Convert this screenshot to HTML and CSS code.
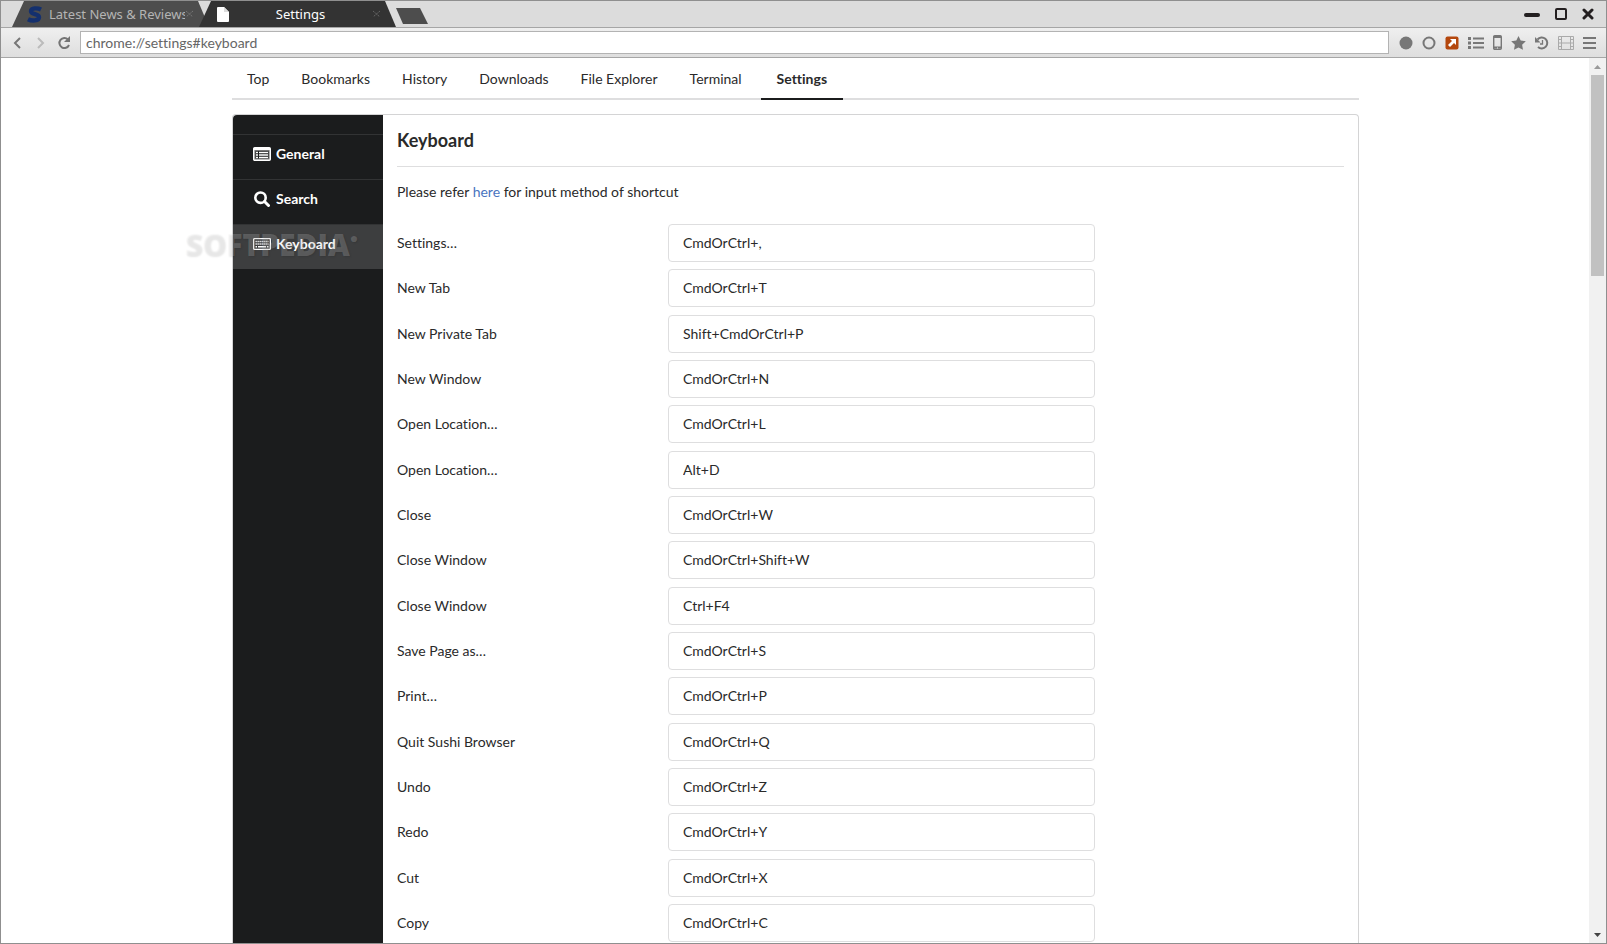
FILE: index.html
```html
<!DOCTYPE html>
<html lang="en">
<head>
  <meta charset="UTF-8">
  <meta name="viewport" content="width=device-width, initial-scale=1.0">
  <title>Settings</title>
  <link rel="stylesheet" href="styles.css">
</head>
<body>
  <!-- Tab bar -->
  <header class="tab-bar">
    <div class="tab tab-first">
      <svg class="tab-logo" width="16" height="17" viewBox="0 0 16 17"><path d="M14 3.500C11 2 4 1.500 4 5.200c0 3.600 8 2.200 8 6 0 3.800-7 4-11 2" fill="none" stroke="#14306e" stroke-width="4.400"/></svg>
      <span class="tab-title">Latest News &amp; Reviews</span>
      <button class="tab-close" aria-label="Close tab"><svg width="9" height="8" viewBox="0 0 9 8"><path d="M1 1l7 6M8 1L1 7" stroke="#777" stroke-dasharray="2 1"/></svg></button>
    </div>
    <div class="tab tab-active">
      <svg width="12" height="15" viewBox="0 0 12 15"><path d="M1 0h6l5 5v9a1 1 0 0 1-1 1H1a1 1 0 0 1-1-1V1a1 1 0 0 1 1-1z" fill="#fff"/><path d="M7 0v5h5" fill="#ddd"/></svg>
      <span class="tab-title">Settings</span>
      <button class="tab-close" aria-label="Close tab"><svg width="9" height="8" viewBox="0 0 9 8"><path d="M1 1l7 6M8 1L1 7" stroke="#666" stroke-dasharray="2 1"/></svg></button>
    </div>
    <button class="new-tab" aria-label="New tab"></button>
    <div class="window-buttons">
      <button aria-label="Minimize"><svg width="16" height="14" viewBox="0 0 16 14"><path d="M2 8h12" stroke="#231f20" stroke-width="4" stroke-linecap="round"/></svg></button>
      <button aria-label="Maximize"><svg width="12" height="14" viewBox="0 0 12 14"><rect x="1" y="2" width="10" height="10" rx="1" fill="none" stroke="#231f20" stroke-width="2"/></svg></button>
      <button aria-label="Close"><svg width="12" height="14" viewBox="0 0 12 14"><path d="M2 3l8 8M10 3l-8 8" stroke="#231f20" stroke-width="3" stroke-linecap="round"/></svg></button>
    </div>
  </header>

  <!-- Address bar -->
  <div class="nav-bar">
    <button aria-label="Back"><svg width="18" height="16" viewBox="0 0 18 16"><path d="M11 3L6 8l5 5" fill="none" stroke="#777" stroke-width="2"/></svg></button>
    <button aria-label="Forward"><svg width="18" height="16" viewBox="0 0 18 16"><path d="M7 3l5 5-5 5" fill="none" stroke="#bbb" stroke-width="2"/></svg></button>
    <button class="reload" aria-label="Reload"><svg width="14" height="14" viewBox="0 0 14 14"><path d="M11 3.500A5 5 0 1 0 12 9" fill="none" stroke="#747474" stroke-width="2"/><path d="M13 0v6H7z" fill="#747474"/></svg></button>
    <input class="url" type="text" value="chrome://settings#keyboard" aria-label="Address">
    <div class="tools">
      <button aria-label="Record"><svg width="14" height="14" viewBox="0 0 14 14"><circle cx="7" cy="7" r="6.500" fill="#777"/></svg></button>
      <button aria-label="Circle"><svg width="14" height="14" viewBox="0 0 14 14"><circle cx="7" cy="7" r="5.500" fill="none" stroke="#777" stroke-width="2"/></svg></button>
      <button aria-label="Open external"><svg width="14" height="14" viewBox="0 0 14 14"><rect width="13" height="13" x=".5" y=".5" rx="2" fill="#b4470d"/><path d="M5 3h6v6L9 7l-4 4-2-2 4-4z" fill="#fff"/></svg></button>
      <button aria-label="List"><svg width="16" height="14" viewBox="0 0 16 14"><path d="M0 2.500h3M0 7h3M0 11.500h3" stroke="#777" stroke-width="3"/><path d="M5 2.500h11M5 7h11M5 11.500h11" stroke="#777" stroke-width="2"/></svg></button>
      <button aria-label="Mobile"><svg width="9" height="15" viewBox="0 0 9 15"><rect x=".7" y=".7" width="7.600" height="13.600" rx="1" fill="none" stroke="#777" stroke-width="1.400"/><path d="M1 2h7M1 12.500h7" stroke="#777" stroke-width="2"/><path d="M4 13h1" stroke="#eee"/></svg></button>
      <button aria-label="Favorites"><svg width="15" height="14" viewBox="0 0 15 14"><path d="M7.500 0l2.200 4.600 5.100.7-3.700 3.500.9 5-4.500-2.400-4.500 2.400.9-5L.2 5.300l5.100-.7z" fill="#777"/></svg></button>
      <button aria-label="History"><svg width="14" height="14" viewBox="0 0 14 14"><path d="M2.500 3.500A5.500 5.500 0 1 1 3 11" fill="none" stroke="#777" stroke-width="2"/><path d="M0 1v5.500h5.500z" fill="#777"/><path d="M7.500 4v4H5" fill="none" stroke="#777" stroke-width="1.300"/></svg></button>
      <button aria-label="Video"><svg width="16" height="14" viewBox="0 0 16 14"><path d="M.5.5h15v13H.5zM3.500.5v13M12.500.5v13M3.500 7h9M.5 3.500h3M.5 7h3M.5 10.500h3M12.500 3.500h3M12.500 7h3M12.500 10.500h3" fill="none" stroke="#aaa"/></svg></button>
      <button aria-label="Menu"><svg width="13" height="14" viewBox="0 0 13 14"><path d="M0 2h13M0 7h13M0 12h13" stroke="#777" stroke-width="2"/></svg></button>
    </div>
  </div>

  <div class="viewport">
    <main class="page">
      <div class="container">
        <nav class="top-menu">
          <a href="#top">Top</a>
          <a href="#bookmarks">Bookmarks</a>
          <a href="#history">History</a>
          <a href="#downloads">Downloads</a>
          <a href="#explorer">File Explorer</a>
          <a href="#terminal">Terminal</a>
          <a href="#settings" class="active">Settings</a>
        </nav>

        <div class="segment">
          <aside class="sidebar">
            <a href="#general"><svg width="18" height="14" viewBox="0 0 18 14"><rect x=".7" y=".7" width="16.600" height="12.600" rx="1" fill="#777" stroke="#fff" stroke-width="1.400"/><path d="M1 2h16" stroke="#fff" stroke-width="2"/><path d="M2.500 4h13v7.500h-13z" fill="#1b1c1d"/><path d="M3 5.500h2M6 5.500h9M3 8h2M6 8h9M3 10.500h2M6 10.500h9" stroke="#fff" stroke-width="1.500"/></svg>General</a>
            <a href="#search"><svg width="18" height="16" viewBox="0 0 18 16"><circle cx="7.500" cy="6.700" r="5.200" fill="none" stroke="#fff" stroke-width="2.600"/><path d="M11.500 10.500l4 4" stroke="#fff" stroke-width="3" stroke-linecap="round"/></svg>Search</a>
            <a href="#keyboard" class="active"><svg width="18" height="12" viewBox="0 0 18 12"><rect x=".6" y=".6" width="16.800" height="10.800" rx="1" fill="none" stroke="#fff" stroke-width="1.400"/><path d="M2.500 3.500h13M2.500 6h13" stroke="#fff" stroke-width="1.600" stroke-dasharray="1.300 .7"/><path d="M2.500 8.700h1.500M5 8.700h8M14 8.700h1.500" stroke="#fff" stroke-width="1.600"/></svg>Keyboard</a>
            <div class="watermark" aria-hidden="true">SOFTPEDIA<sup>●</sup></div>
          </aside>

          <section class="content">
            <h3>Keyboard</h3>
            <p>Please refer <a href="#here">here</a> for input method of shortcut</p>
            <form class="shortcuts">
              <div class="field"><label for="k1">Settings…</label><input id="k1" type="text" value="CmdOrCtrl+,"></div>
              <div class="field"><label for="k2">New Tab</label><input id="k2" type="text" value="CmdOrCtrl+T"></div>
              <div class="field"><label for="k3">New Private Tab</label><input id="k3" type="text" value="Shift+CmdOrCtrl+P"></div>
              <div class="field"><label for="k4">New Window</label><input id="k4" type="text" value="CmdOrCtrl+N"></div>
              <div class="field"><label for="k5">Open Location…</label><input id="k5" type="text" value="CmdOrCtrl+L"></div>
              <div class="field"><label for="k6">Open Location…</label><input id="k6" type="text" value="Alt+D"></div>
              <div class="field"><label for="k7">Close</label><input id="k7" type="text" value="CmdOrCtrl+W"></div>
              <div class="field"><label for="k8">Close Window</label><input id="k8" type="text" value="CmdOrCtrl+Shift+W"></div>
              <div class="field"><label for="k9">Close Window</label><input id="k9" type="text" value="Ctrl+F4"></div>
              <div class="field"><label for="k10">Save Page as…</label><input id="k10" type="text" value="CmdOrCtrl+S"></div>
              <div class="field"><label for="k11">Print…</label><input id="k11" type="text" value="CmdOrCtrl+P"></div>
              <div class="field"><label for="k12">Quit Sushi Browser</label><input id="k12" type="text" value="CmdOrCtrl+Q"></div>
              <div class="field"><label for="k13">Undo</label><input id="k13" type="text" value="CmdOrCtrl+Z"></div>
              <div class="field"><label for="k14">Redo</label><input id="k14" type="text" value="CmdOrCtrl+Y"></div>
              <div class="field"><label for="k15">Cut</label><input id="k15" type="text" value="CmdOrCtrl+X"></div>
              <div class="field"><label for="k16">Copy</label><input id="k16" type="text" value="CmdOrCtrl+C"></div>
            </form>
          </section>
        </div>
      </div>
    </main>

    <div class="scrollbar">
      <svg width="17" height="17" viewBox="0 0 17 17"><path d="M5 11h7L8.500 7z" fill="#999"/></svg>
      <div class="thumb"></div>
      <svg width="17" height="17" viewBox="0 0 17 17"><path d="M5 7h7l-3.500 4z" fill="#444"/></svg>
    </div>
  </div>
</body>
</html>
```
FILE: styles.css
```css
* {
  box-sizing: border-box;
}
body {
  margin: 0;
  min-height: 100vh;
  display: flex;
  flex-direction: column;
  border: 1px solid #8f8f8f;
  background: #fff;
  color: #2a2a2a;
  font-family: Lato, "Liberation Sans", sans-serif;
  font-size: 14px;
  font-variant-ligatures: none;
  line-height: 20px;
}
a {
  color: inherit;
  text-decoration: none;
}
svg {
  display: block;
  flex: none;
}
button {
  display: flex;
  align-items: center;
  justify-content: center;
  padding: 0;
  border: none;
  background: none;
}

/* tab bar */
.tab-bar {
  display: flex;
  align-items: center;
  height: 27px;
  padding-left: 11px;
  background: #dcdcdc;
  border-bottom: 1px solid #a6a6a6;
  font-family: "Noto Sans", sans-serif;
  font-size: 13px;
}
.tab {
  display: flex;
  align-items: center;
  align-self: stretch;
  width: 197px;
  padding: 0 15px;
  background: #4d4d4d;
  color: #b4b4b4;
  clip-path: polygon(12px 0, 186px 0, 100% 100%, 0 100%);
}
.tab-first {
  gap: 6px;
}
.tab-title {
  flex: 1;
  overflow: hidden;
  white-space: nowrap;
}
.tab-active {
  margin-left: -10px;
  padding-left: 18px;
  background: #333;
  color: #fff;
  text-align: center;
}
.tab-first .tab-close {
  margin-left: -6px;
}
.new-tab {
  width: 32px;
  height: 16px;
  margin-top: 4px;
  background: #4d4d4d;
  clip-path: polygon(0 0, 24px 0, 100% 100%, 7px 100%);
}
.window-buttons {
  display: flex;
  gap: 15px;
  margin-left: auto;
  padding: 0 12px 1px 0;
}

/* address bar */
.nav-bar {
  display: flex;
  align-items: center;
  height: 30px;
  padding: 0 10px 0 6px;
  background: linear-gradient(#efefef, #dedede);
  border-bottom: 1px solid #a6a6a6;
}
.nav-bar > button {
  width: 22px;
}
.nav-bar > .reload {
  width: 26px;
}
.url {
  flex: 1;
  height: 23px;
  margin: 0 10px 0 3px;
  padding: 0 5px;
  border: 1px solid #b3b3b3;
  background: #fff;
  color: #666;
  font: inherit;
  font-variant-ligatures: none;
}
.tools {
  display: flex;
  align-items: center;
  gap: 9px;
}

/* page and its scrollbar */
.viewport {
  flex: 1;
  display: flex;
}
.page {
  flex: 1;
  display: flex;
  justify-content: center;
  padding-left: 1px;
}
.container {
  display: flex;
  flex-direction: column;
  width: 100%;
  max-width: 1127px;
}
.scrollbar {
  display: flex;
  flex-direction: column;
  width: 17px;
  background: #f1f1f1;
}
.thumb {
  flex: none;
  height: 201px;
  margin: 0 2px auto;
  background: #c1c1c1;
}

.top-menu {
  display: flex;
  border-bottom: 2px solid #dededf;
}
.top-menu a {
  height: 42px;
  margin-bottom: -2px;
  padding: 11px 17px 0 15px;
}
.top-menu .active {
  margin-left: 2px;
  padding: 11px 16px 0;
  border-bottom: 2px solid #1b1c1d;
  font-weight: bold;
}

.segment {
  flex: 1;
  display: flex;
  margin-top: 14px;
  border: 1px solid #d4d4d5;
  border-bottom: none;
  border-radius: 4px 4px 0 0;
}
.sidebar {
  position: relative;
  width: 150px;
  padding-top: 19px;
  background: #1b1c1d;
  border-top-left-radius: 4px;
  color: #fff;
  font-weight: bold;
}
.sidebar a {
  display: flex;
  align-items: center;
  gap: 5px;
  height: 45px;
  padding: 0 20px 6px;
  border-top: 1px solid #323334;
}
.sidebar .active {
  background: #3d3e3f;
}
.watermark {
  position: absolute;
  top: 112px;
  left: -48px;
  color: rgba(240, 240, 240, 0.2);
  font-family: "Open Sans", sans-serif;
  font-size: 30px;
  font-weight: 800;
  line-height: 36px;
  text-shadow: 1px 1px 2px rgba(0, 0, 0, 0.1);
  white-space: nowrap;
}
.watermark sup {
  font-size: 14px;
  line-height: 14px;
  vertical-align: 13px;
}

.content {
  flex: 1;
  display: flex;
  flex-direction: column;
  padding: 13px 14px 1px;
}
h3 {
  margin: 0;
  padding-bottom: 14px;
  border-bottom: 1px solid #dededf;
  font-size: 18px;
  line-height: 24px;
}
p {
  margin: 15px 0 22px;
}
p a {
  color: #4a74c0;
}
.shortcuts {
  flex: 1;
  display: flex;
  flex-direction: column;
  justify-content: space-between;
  gap: 6px;
}
.field {
  display: grid;
  grid-template-columns: 271px minmax(200px, 427px);
  align-items: center;
}
.field input {
  height: 38px;
  padding: 0 14px 1px;
  border: 1px solid #dededf;
  border-radius: 4px;
  color: #2a2a2a;
  font: inherit;
  font-variant-ligatures: none;
}
```
